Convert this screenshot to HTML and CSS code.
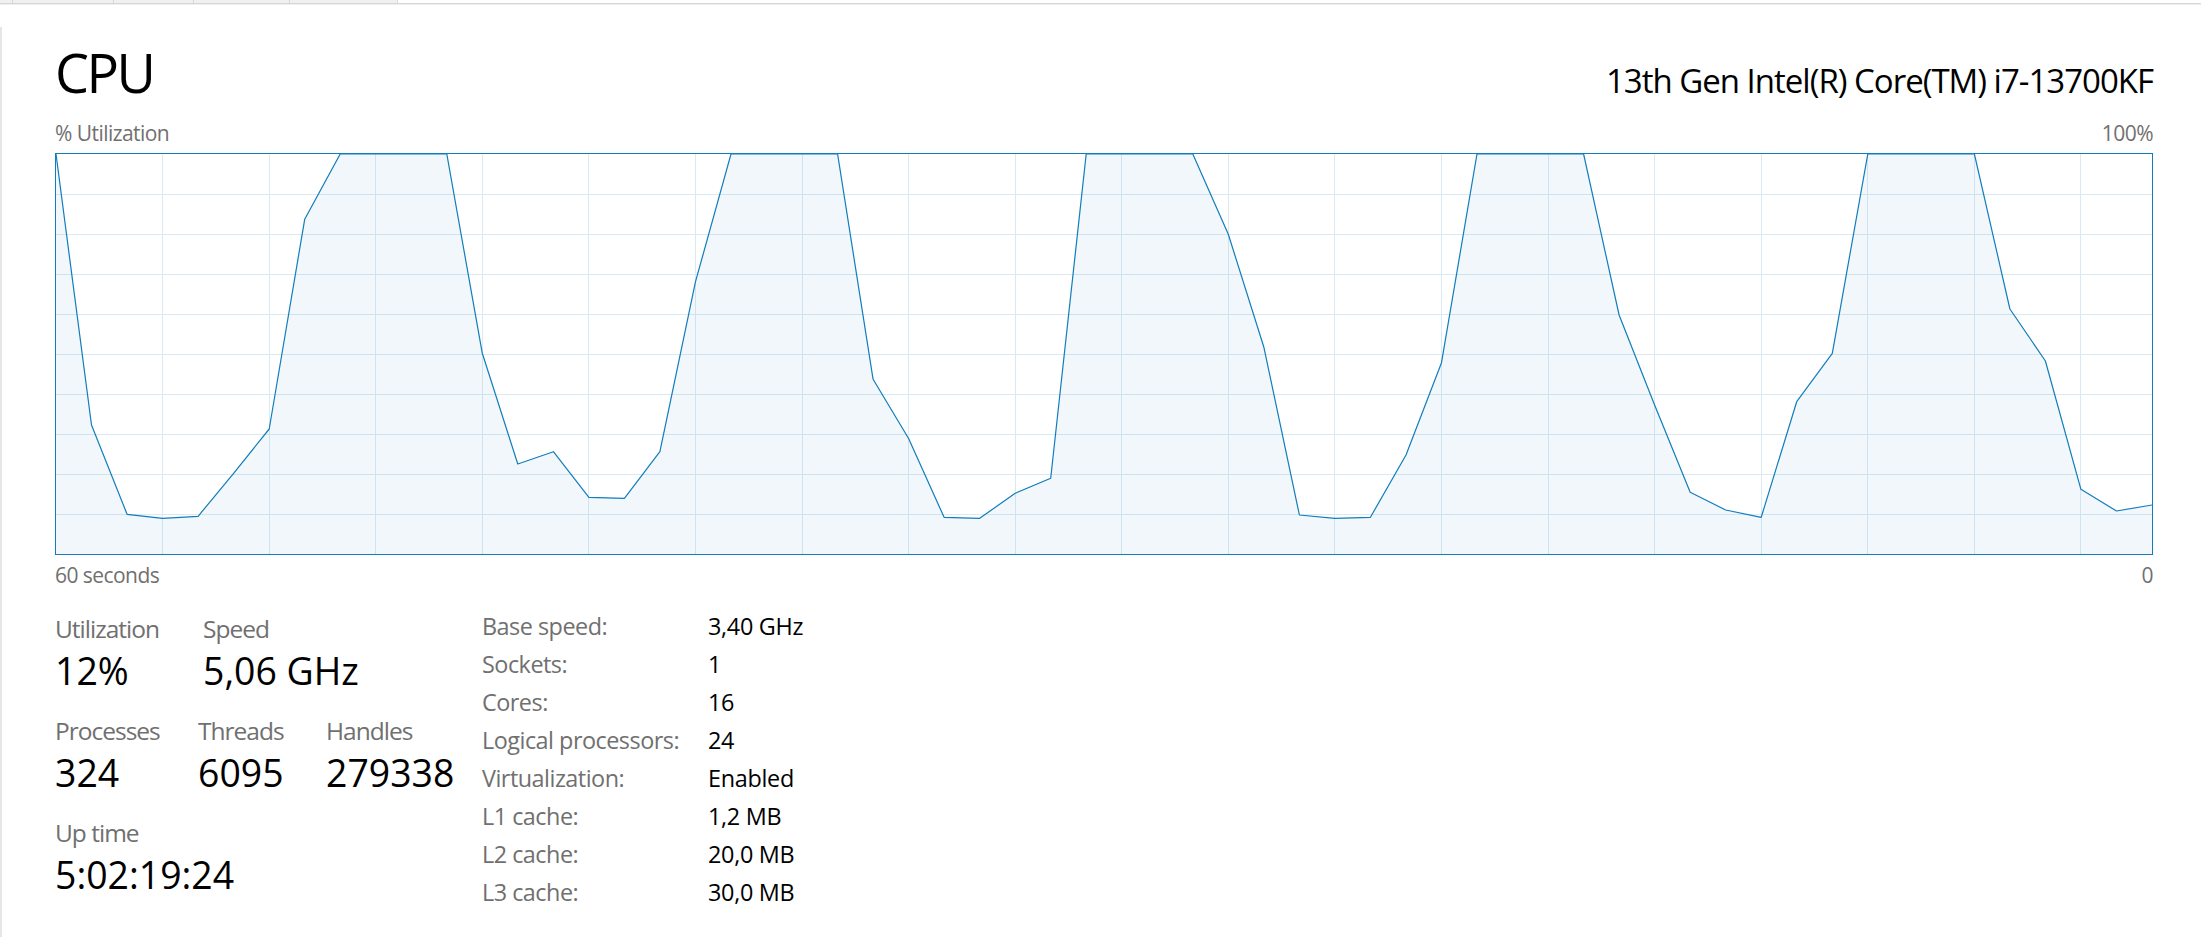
FILE: index.html
```html
<!DOCTYPE html>
<html lang="en">
<head>
<meta charset="utf-8">
<title>Task Manager - CPU</title>
<link rel="stylesheet" href="styles.css">
</head>
<body>
<div class="tabs">
  <span class="tab tab-a"></span>
  <span class="tab tab-b"></span>
  <span class="tab tab-c"></span>
  <span class="tab tab-d"></span>
  <span class="tab tab-e"></span>
</div>
<main class="panel">
  <header class="head">
    <h1 class="title">CPU</h1>
    <div class="model">13th Gen Intel(R) Core(TM) i7-13700KF</div>
  </header>
  <div class="axis axis-top"><span>% Utilization</span><span>100%</span></div>
  <div class="graph">
    <svg class="chart" width="2096" height="400" viewBox="0 0 2096 400" preserveAspectRatio="none">
      <g class="grid">
        <line x1="0" y1="40.5" x2="2096" y2="40.5"/>
        <line x1="0" y1="80.5" x2="2096" y2="80.5"/>
        <line x1="0" y1="120.5" x2="2096" y2="120.5"/>
        <line x1="0" y1="160.5" x2="2096" y2="160.5"/>
        <line x1="0" y1="200.5" x2="2096" y2="200.5"/>
        <line x1="0" y1="240.5" x2="2096" y2="240.5"/>
        <line x1="0" y1="280.5" x2="2096" y2="280.5"/>
        <line x1="0" y1="320.5" x2="2096" y2="320.5"/>
        <line x1="0" y1="360.5" x2="2096" y2="360.5"/>
        <line x1="106.5" y1="0" x2="106.5" y2="400"/>
        <line x1="213.5" y1="0" x2="213.5" y2="400"/>
        <line x1="319.5" y1="0" x2="319.5" y2="400"/>
        <line x1="426.5" y1="0" x2="426.5" y2="400"/>
        <line x1="532.5" y1="0" x2="532.5" y2="400"/>
        <line x1="639.5" y1="0" x2="639.5" y2="400"/>
        <line x1="746.5" y1="0" x2="746.5" y2="400"/>
        <line x1="852.5" y1="0" x2="852.5" y2="400"/>
        <line x1="959.5" y1="0" x2="959.5" y2="400"/>
        <line x1="1065.5" y1="0" x2="1065.5" y2="400"/>
        <line x1="1172.5" y1="0" x2="1172.5" y2="400"/>
        <line x1="1278.5" y1="0" x2="1278.5" y2="400"/>
        <line x1="1385.5" y1="0" x2="1385.5" y2="400"/>
        <line x1="1492.5" y1="0" x2="1492.5" y2="400"/>
        <line x1="1598.5" y1="0" x2="1598.5" y2="400"/>
        <line x1="1705.5" y1="0" x2="1705.5" y2="400"/>
        <line x1="1811.5" y1="0" x2="1811.5" y2="400"/>
        <line x1="1918.5" y1="0" x2="1918.5" y2="400"/>
        <line x1="2024.5" y1="0" x2="2024.5" y2="400"/>
      </g>
      <polygon class="area" points="0,0 35.5,271 71.1,360.3 106.6,364.3 142.1,362.3 177.6,319.3 213.2,275 248.7,65.3 284.2,0 319.7,0 355.3,0 390.8,0 426.3,199.3 461.8,310 497.4,297.7 532.9,343.3 568.4,344.3 603.9,297.7 639.5,127.7 675,0 710.5,0 746,0 781.6,0 817.1,225.3 852.6,284.5 888.1,363.3 923.7,364.3 959.2,339.3 994.7,324.3 1030.2,0 1065.8,0 1101.3,0 1136.8,0 1172.3,80.3 1207.9,193.3 1243.4,361 1278.9,364.3 1314.4,363.3 1350,301 1385.5,208.7 1421,0 1456.5,0 1492.1,0 1527.6,0 1563.1,161 1598.6,251 1634.2,338.3 1669.7,356 1705.2,363.3 1740.7,247.7 1776.3,199.3 1811.8,0 1847.3,0 1882.8,0 1918.4,0 1953.9,155 1989.4,207 2024.9,335.3 2060.5,357 2096,351 2096,400 0,400"/>
      <polyline class="line" points="0,0 35.5,271 71.1,360.3 106.6,364.3 142.1,362.3 177.6,319.3 213.2,275 248.7,65.3 284.2,0 319.7,0 355.3,0 390.8,0 426.3,199.3 461.8,310 497.4,297.7 532.9,343.3 568.4,344.3 603.9,297.7 639.5,127.7 675,0 710.5,0 746,0 781.6,0 817.1,225.3 852.6,284.5 888.1,363.3 923.7,364.3 959.2,339.3 994.7,324.3 1030.2,0 1065.8,0 1101.3,0 1136.8,0 1172.3,80.3 1207.9,193.3 1243.4,361 1278.9,364.3 1314.4,363.3 1350,301 1385.5,208.7 1421,0 1456.5,0 1492.1,0 1527.6,0 1563.1,161 1598.6,251 1634.2,338.3 1669.7,356 1705.2,363.3 1740.7,247.7 1776.3,199.3 1811.8,0 1847.3,0 1882.8,0 1918.4,0 1953.9,155 1989.4,207 2024.9,335.3 2060.5,357 2096,351"/>
    </svg>
  </div>
  <div class="axis axis-bottom"><span>60 seconds</span><span>0</span></div>
  <section class="details">
    <div class="stats">
      <div class="stat-row">
        <div class="stat w-util"><div class="lbl">Utilization</div><div class="val">12%</div></div>
        <div class="stat"><div class="lbl">Speed</div><div class="val">5,06 GHz</div></div>
      </div>
      <div class="stat-row">
        <div class="stat w-proc"><div class="lbl">Processes</div><div class="val">324</div></div>
        <div class="stat w-thr"><div class="lbl">Threads</div><div class="val">6095</div></div>
        <div class="stat"><div class="lbl">Handles</div><div class="val">279338</div></div>
      </div>
      <div class="stat-row">
        <div class="stat"><div class="lbl">Up time</div><div class="val">5:02:19:24</div></div>
      </div>
    </div>
    <dl class="info">
      <dt>Base speed:</dt><dd>3,40 GHz</dd>
      <dt>Sockets:</dt><dd>1</dd>
      <dt>Cores:</dt><dd>16</dd>
      <dt>Logical processors:</dt><dd>24</dd>
      <dt>Virtualization:</dt><dd>Enabled</dd>
      <dt>L1 cache:</dt><dd>1,2 MB</dd>
      <dt>L2 cache:</dt><dd>20,0 MB</dd>
      <dt>L3 cache:</dt><dd>30,0 MB</dd>
    </dl>
  </section>
</main>
</body>
</html>
```
FILE: styles.css
```css
html, body {
  margin: 0;
  padding: 0;
  background: #ffffff;
}
body {
  font-family: "Open Sans", "Noto Sans", sans-serif;
  color: #000;
  width: 2201px;
  height: 937px;
  overflow: hidden;
}
.tabs {
  display: flex;
  height: 3px;
  border-bottom: 1px solid #d6d6d6;
  box-shadow: 0 1px 0 #eeeeee;
}
.tab {
  display: block;
  height: 3px;
  background: #f0f0f0;
  border-right: 1px solid #d9d9d9;
}
.tab-a { width: 12px; }
.tab-b { width: 100px; }
.tab-c { width: 79px; }
.tab-d { width: 95px; }
.tab-e { width: 107px; }

.panel {
  margin-top: 23px;
  border-left: 2px solid #e6e6e6;
  padding: 13px 48px 0 53px;
  height: 910px;
  box-sizing: border-box;
}
.head {
  display: flex;
  justify-content: space-between;
  align-items: baseline;
  height: 64px;
}
.title {
  margin: 0;
  font-size: 54px;
  line-height: 64px;
  font-weight: 400;
  letter-spacing: -2.5px;
}
.model {
  font-size: 33px;
  line-height: 64px;
  letter-spacing: -1px;
}
.axis {
  display: flex;
  justify-content: space-between;
  font-size: 21px;
  line-height: 24px;
  color: #707070;
  letter-spacing: -0.55px;
}
.axis-top { margin-top: 17px; }
.axis-bottom { margin-top: 8px; }
.graph {
  margin-top: 8px;
  border: 1px solid #117dbb;
  height: 400px;
}
.chart {
  display: block;
  width: 100%;
  height: 400px;
}
.grid line {
  stroke: #d9eaf4;
  stroke-width: 1;
}
.area {
  fill: rgba(17, 125, 187, 0.06);
  stroke: none;
}
.line {
  fill: none;
  stroke: #117dbb;
  stroke-width: 1.2;
  stroke-linejoin: round;
}
.details {
  display: flex;
  align-items: flex-start;
  margin-top: 20px;
}
.stats {
  width: 427px;
  padding-top: 7px;
  flex: none;
}
.stat-row {
  display: flex;
  margin-bottom: 23px;
}
.stat { flex: none; }
.w-util { width: 148px; }
.w-proc { width: 143px; }
.w-thr { width: 128px; }
.lbl {
  font-size: 24.5px;
  line-height: 30px;
  color: #707070;
  margin-bottom: 5px;
  letter-spacing: -1px;
}
.val {
  font-size: 37.4px;
  line-height: 44px;
  color: #000;
}
.info {
  display: grid;
  grid-template-columns: 226px auto;
  grid-auto-rows: 38px;
  margin: 0;
  font-size: 23.4px;
  line-height: 38px;
}
.info dt {
  color: #707070;
  white-space: nowrap;
  letter-spacing: -0.5px;
}
.info dd {
  margin: 0;
  color: #000;
  white-space: nowrap;
  letter-spacing: -0.3px;
}
```
